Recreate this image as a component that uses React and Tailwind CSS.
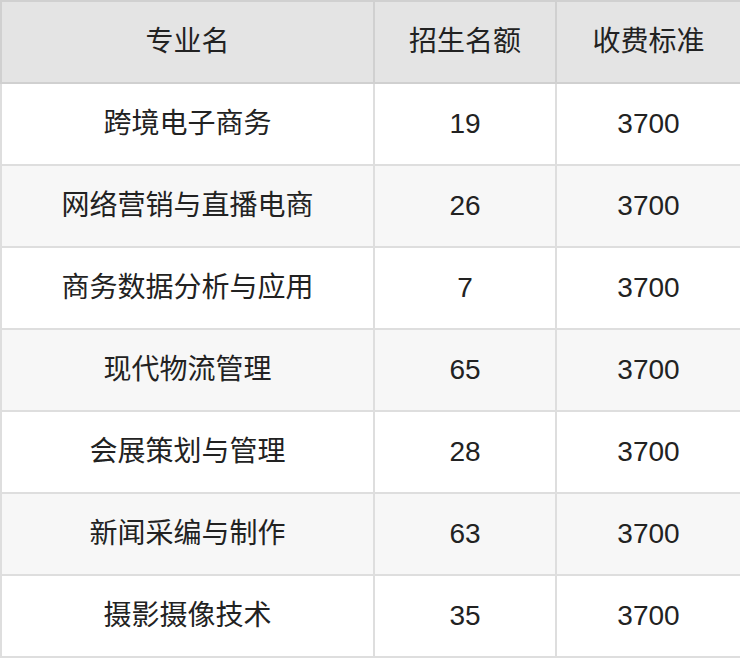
import React from 'react';

const rows = [
    ['跨境电子商务', '19', '3700'],
    ['网络营销与直播电商', '26', '3700'],
    ['商务数据分析与应用', '7', '3700'],
    ['现代物流管理', '65', '3700'],
    ['会展策划与管理', '28', '3700'],
    ['新闻采编与制作', '63', '3700'],
    ['摄影摄像技术', '35', '3700'],
];

const font = { fontFamily: '"Liberation Sans", Arial, "Noto Sans CJK SC", sans-serif' };

export default function App() {
    return (
        <div className="w-[740px] h-[658px] bg-white" style={font}>
            <table className="w-[740px] border-collapse border-2 border-[#d4d4d4] text-[28px] text-[#222] table-fixed">
                <colgroup>
                    <col className="w-[373px]" />
                    <col className="w-[182px]" />
                    <col className="w-[185px]" />
                </colgroup>
                <thead>
                    <tr className="bg-[#e4e4e4] h-[82px]">
                        <th className="font-normal border-2 border-[#d0d0d0] text-center">专业名</th>
                        <th className="font-normal border-2 border-[#d0d0d0] text-center">招生名额</th>
                        <th className="font-normal border-2 border-[#d0d0d0] text-center">收费标准</th>
                    </tr>
                </thead>
                <tbody>
                    {rows.map((r, i) => (
                        <tr key={i} className={`h-[82px] ${i % 2 === 1 ? 'bg-[#f7f7f7]' : 'bg-white'}`}>
                            {r.map((c, j) => (
                                <td key={j} className="border-2 border-[#dedede] text-center">{c}</td>
                            ))}
                        </tr>
                    ))}
                </tbody>
            </table>
        </div>
    );
}
